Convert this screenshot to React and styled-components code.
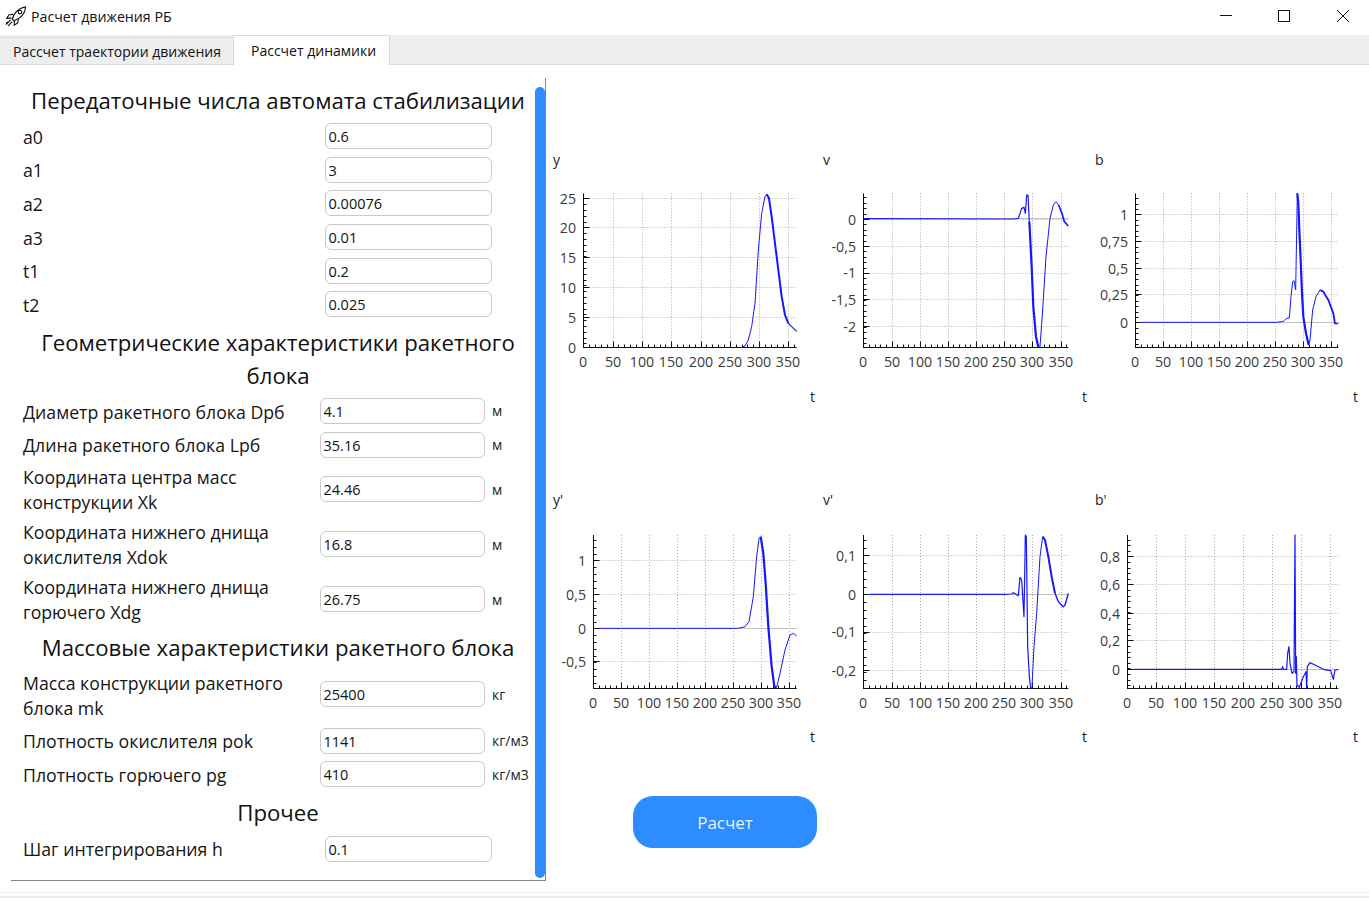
import React from 'react';
import styled, { createGlobalStyle } from 'styled-components';

const FONT = '"Open Sans", "Noto Sans", "Liberation Sans", sans-serif';

const Global = createGlobalStyle`
  html, body { margin: 0; padding: 0; background: #fff; overflow: hidden; }
  body { font-family: ${FONT}; color: #000; }
  * { box-sizing: border-box; }
`;

const Window = styled.div`
  width: 1369px; height: 898px; display: flex; flex-direction: column; overflow: hidden; background: #fff;
`;
const TitleBar = styled.div`
  height: 35px; flex: none; display: flex; align-items: center; padding-left: 5px;
`;
const AppIcon = styled.svg`
  width: 22px; height: 22px; flex: none; margin-right: 4px; margin-top: -3px;
`;
const AppTitle = styled.span`
  font-size: 14.2px; flex: 1; margin-top: -3px; color: #111;
`;
const WinButton = styled.svg`
  width: 58px; height: 35px; flex: none; display: block;
`;
const TabBar = styled.div`
  height: 30px; flex: none; display: flex; align-items: flex-end; background: #eee; border-bottom: 1px solid #dadada;
`;
const Tab = styled.div`
  font-size: 14px; display: flex; align-items: center; color: #111;
  ${p => p.$active ? `
    height: 30px; width: 157px; padding-left: 17px; background: #fff; border: 1px solid #dadada; border-bottom: none; margin-bottom: -1px;
  ` : `
    height: 27px; width: 233px; padding-left: 13px; background: #eee; border: 1px solid #dadada; border-left: none; border-right: none; border-bottom: none;
  `}
`;
const Body = styled.div`
  flex: 1; display: flex; min-height: 0; align-items: flex-start;
`;
const Panel = styled.div`
  position: relative; width: 535px; height: 803px; margin: 13px 0 0 11px; flex: none;
  border-right: 1px solid #7d8791; border-bottom: 1px solid #7d8791; padding: 5px 0 0 12px;
`;
const Thumb = styled.div`
  position: absolute; right: 0; top: 9px; width: 10px; height: 791px; background: #2d8cff; border-radius: 5px;
`;
const Form = styled.div`
  width: 510px; display: flex; flex-direction: column;
`;
const Heading = styled.div`
  font-size: 22.2px; line-height: 33px; text-align: center; margin: ${p => p.$m || '0'}; color: #111;
`;
const Row = styled.div`
  display: grid; align-items: center; height: ${p => p.$h || 33.7}px; margin-top: ${p => p.$mt || 0}px;
  grid-template-columns: ${p => p.$unit ? '297px 165px auto' : '302px 167px'};
`;
const Label = styled.div`
  font-size: 17.7px; line-height: 25px; white-space: pre-line; color: #151515; padding-top: 2.5px;
`;
const Field = styled.input`
  width: 100%; height: 26px; border: 1.5px solid #c9c9c9; border-radius: 6px; padding: 1px 0 0 2.5px; outline: none;
  font-family: ${FONT}; font-size: 14.5px; color: #111; background: #fff; display: block;
`;
const Unit = styled.div`
  font-size: 14px; padding-left: 7px; white-space: nowrap; color: #222;
`;
const Right = styled.div`
  flex: 1; padding: 85px 0 0 7px; display: flex; flex-direction: column; min-width: 0;
`;
const Charts = styled.div`
  display: grid; grid-template-columns: 270px 272px 271px; grid-auto-rows: 260px; row-gap: 80px;
`;
const Cell = styled.div`
  display: flex; flex-direction: column;
`;
const AxisTitle = styled.div`
  font-size: 14px; height: 20px; line-height: 20px; color: #222;
`;
const AxisFoot = styled.div`
  font-size: 14px; height: 25px; line-height: 23px; text-align: right; padding-right: 8px; color: #222;
`;
const Plot = styled.svg`
  display: block; width: 270px; height: 215px; overflow: visible;
`;
const TickText = styled.text`
  font-family: ${FONT}; font-size: 14.2px; fill: #3a3a3a;
`;
const CalcButton = styled.div`
  width: 184px; height: 52px; margin: 46px 0 0 80px; border-radius: 20px; background: #2d8cff; color: #e9f2ff;
  font-size: 17px; display: flex; align-items: center; justify-content: center;
`;
const Footer = styled.div`
  height: 6px; flex: none; border-top: 1px solid #eee; position: relative; background: #fff;
  &::after { content: ''; position: absolute; left: 0; right: 0; top: 3px; height: 2px; background: #ececec; }
`;

const X_LABELS = ['0', '50', '100', '150', '200', '250', '300', '350'];
const LINE = '#1616ff';

const charts = [
  {
    title: 'y', cx: 553, cy: 170, ox: 545, oy: 150, ax: 115, by: 592, rt: 755, tp: 130, step: 87.9,
    yt: [['25', 145], ['20', 232], ['15', 322], ['10', 412], ['5', 502], ['0', 592]],
    curves: [
      [1, [[590, 592], [600, 588], [610, 570], [620, 530], [630, 460], [640, 300], [650, 190], [660, 140], [665, 133]]],
      [2, [[665, 133], [672, 145], [680, 200], [690, 280], [700, 360], [710, 440], [720, 495], [730, 520]]],
      [1.2, [[730, 520], [740, 530], [755, 544]]],
    ],
  },
  {
    title: 'v', cx: 823, cy: 170, ox: 820, oy: 150, ax: 130, by: 592, rt: 745, tp: 130, step: 84.5, zero: 205,
    yt: [['0', 207], ['-0,5', 288], ['-1', 368], ['-1,5', 448], ['-2', 529]],
    curves: [
      [1.2, [[132, 206], [580, 207], [595, 205], [605, 175], [612, 172], [616, 190], [620, 135], [624, 135], [628, 215]]],
      [2.2, [[628, 215], [635, 350], [640, 470], [648, 560], [655, 592]]],
      [1, [[655, 592], [660, 590], [668, 480], [678, 320], [690, 205], [700, 165], [708, 155], [716, 165]]],
      [1.6, [[716, 165], [726, 190], [733, 215], [745, 228]]],
    ],
  },
  {
    title: 'b', cx: 1095, cy: 170, ox: 1090, oy: 150, ax: 136, by: 592, rt: 745, tp: 130, step: 84, zero: 516,
    yt: [['1', 193], ['0,75', 274], ['0,5', 355], ['0,25', 433], ['0', 516]],
    curves: [
      [1, [[155, 517], [560, 517], [580, 514], [590, 505], [598, 504], [603, 440], [608, 395], [612, 392], [617, 420], [622, 130]]],
      [2.2, [[622, 130], [625, 160], [628, 240], [632, 330], [636, 430], [640, 500], [648, 550], [656, 585]]],
      [1, [[656, 585], [660, 570], [668, 480], [678, 440], [690, 420]]],
      [1.8, [[690, 420], [700, 425], [715, 450], [730, 490], [735, 522]]],
      [1.2, [[735, 522], [745, 520]]],
    ],
  },
  {
    title: "y'", cx: 553, cy: 510, ox: 545, oy: 490, ax: 145, by: 595, rt: 755, tp: 135, step: 84, zero: 415,
    yt: [['1', 211], ['0,5', 313], ['0', 415], ['-0,5', 514]],
    curves: [
      [1, [[160, 415], [580, 415], [600, 410], [612, 395], [625, 320], [635, 200], [642, 145], [647, 140]]],
      [2.2, [[647, 140], [655, 190], [662, 280], [670, 410], [680, 530], [688, 590], [695, 592]]],
      [1, [[695, 592], [705, 550], [720, 480], [735, 435], [745, 430], [755, 438]]],
    ],
  },
  {
    title: "v'", cx: 823, cy: 510, ox: 820, oy: 490, ax: 130, by: 595, rt: 745, tp: 135, step: 84.5, zero: 313,
    yt: [['0,1', 196], ['0', 313], ['-0,1', 425], ['-0,2', 541]],
    curves: [
      [1.2, [[150, 313], [555, 313], [575, 312], [580, 308], [595, 317], [600, 262], [605, 270], [610, 350], [612, 380], [616, 135], [619, 140], [623, 470], [628, 560], [632, 595]]],
      [1, [[632, 595], [636, 590], [642, 470], [650, 370], [660, 200], [668, 140]]],
      [2, [[668, 140], [675, 150], [685, 200], [695, 260], [705, 310]]],
      [1.4, [[705, 310], [715, 335], [730, 350], [735, 345], [745, 310]]],
    ],
  },
  {
    title: "b'", cx: 1095, cy: 510, ox: 1090, oy: 490, ax: 112, by: 595, rt: 745, tp: 135, step: 87, zero: 538,
    yt: [['0,8', 199], ['0,6', 283], ['0,4', 370], ['0,2', 451], ['0', 538]],
    curves: [
      [1.2, [[130, 538], [575, 538], [578, 530], [580, 538], [590, 538], [593, 490], [597, 470], [600, 520], [606, 550], [612, 545], [615, 135], [617, 550], [619, 500], [621, 585], [628, 592], [640, 560], [648, 545], [650, 595], [652, 530], [660, 518], [675, 525], [700, 538], [722, 542], [730, 568], [735, 540], [745, 539]]],
    ],
  },
];

function Chart({ c }) {
  const X = z => c.ox + z / 3;
  const Y = z => c.oy + z / 3;
  const crisp = v => Math.round(v) + 0.5;
  const ax = crisp(X(c.ax)), by = crisp(Y(c.by)), rt = X(c.rt), tp = Y(c.tp);
  const xMajor = X_LABELS.map((_, i) => crisp(X(c.ax + c.step * i)));
  const xMinor = [];
  for (let x = X(c.ax); x <= rt; x += c.step / 15) xMinor.push(crisp(x));
  const yPix = c.yt.map(([, z]) => Y(z));
  const yStep = Math.abs(yPix[1] - yPix[0]) / 5;
  const yMinor = [];
  for (let y = yPix[0] % yStep; y <= by; y += yStep) if (y >= tp) yMinor.push(crisp(y));
  return (
    <Cell>
      <AxisTitle>{c.title}</AxisTitle>
      <Plot viewBox={`${c.cx} ${c.cy} 270 215`}>
        {xMajor.slice(1).map(x => (
          <line key={x} x1={x} x2={x} y1={tp} y2={by} stroke="#aaaaaa" strokeDasharray="1 2" />
        ))}
        {yPix.map(y => (
          <line key={y} x1={ax} x2={rt} y1={crisp(y)} y2={crisp(y)} stroke="#aaaaaa" strokeDasharray="1 2" />
        ))}
        {c.zero !== undefined && <line x1={ax} x2={rt} y1={crisp(Y(c.zero))} y2={crisp(Y(c.zero))} stroke="#c0c0c0" />}
        {xMinor.map((x, i) => <line key={i} x1={x} x2={x} y1={by - 3} y2={by} stroke="#111" />)}
        {xMajor.map(x => <line key={x} x1={x} x2={x} y1={by - 6} y2={by} stroke="#111" />)}
        {yMinor.map((y, i) => <line key={i} x1={ax} x2={ax + 3} y1={y} y2={y} stroke="#111" />)}
        {yPix.map(y => <line key={y} x1={ax} x2={ax + 6} y1={crisp(y)} y2={crisp(y)} stroke="#111" />)}
        <line x1={ax} x2={ax} y1={tp} y2={by + 0.5} stroke="#111" />
        <line x1={ax} x2={rt} y1={by} y2={by} stroke="#111" />
        {c.curves.map(([w, pts], i) => (
          <polyline key={i} points={pts.map(([a, b]) => `${X(a)},${Y(b)}`).join(' ')} fill="none" stroke={LINE} strokeWidth={w} strokeLinejoin="round" />
        ))}
        {X_LABELS.map((t, i) => (
          <TickText key={t} x={xMajor[i] - 0.5} y={by + 19} textAnchor="middle">{t}</TickText>
        ))}
        {c.yt.map(([t], i) => (
          <TickText key={t} x={ax - 7.5} y={yPix[i] + 5.5} textAnchor="end">{t}</TickText>
        ))}
      </Plot>
      <AxisFoot>t</AxisFoot>
    </Cell>
  );
}

const Item = ({ label, value, unit, h, mt }) => (
  <Row $unit={!!unit} $h={h} $mt={mt}>
    <Label>{label}</Label>
    <Field readOnly value={value} />
    {unit && <Unit>{unit}</Unit>}
  </Row>
);

export default function App() {
  return (
    <Window>
      <Global />
      <TitleBar>
        <AppIcon viewBox="0 0 24 24" fill="none" stroke="#111" strokeWidth="1.2" strokeLinecap="round" strokeLinejoin="round">
          <path d="M8 15.5c1-5.5 6-12 14.5-13.5C22 10 16 15 9.8 17.2z" />
          <circle cx="16.3" cy="7.7" r="2" />
          <path d="M8.6 10.2 4.4 10.6 1.8 14.6l5-.3" />
          <path d="M14.6 15 14 19.4l-4 2.8.2-4.6" />
          <path d="M5.8 16.6 1.4 21M7.6 18.4 3.6 22.6M2.4 18.6l-.8.8" />
        </AppIcon>
        <AppTitle>Расчет движения РБ</AppTitle>
        <WinButton viewBox="0 0 58 35"><line x1="25" x2="37" y1="15.5" y2="15.5" stroke="#111" /></WinButton>
        <WinButton viewBox="0 0 58 35"><rect x="25.5" y="10.5" width="11" height="11" fill="none" stroke="#111" /></WinButton>
        <WinButton viewBox="0 0 58 35"><path d="M26 10l12 12M38 10 26 22" stroke="#111" fill="none" /></WinButton>
      </TitleBar>
      <TabBar>
        <Tab>Рассчет траектории движения</Tab>
        <Tab $active>Рассчет динамики</Tab>
      </TabBar>
      <Body>
        <Panel>
          <Form>
            <Heading $m="1px 0 2px">Передаточные числа автомата стабилизации</Heading>
            <Item label="a0" value="0.6" />
            <Item label="a1" value="3" />
            <Item label="a2" value="0.00076" />
            <Item label="a3" value="0.01" />
            <Item label="t1" value="0.2" />
            <Item label="t2" value="0.025" />
            <Heading $m="5px 0 2px">Геометрические характеристики ракетного блока</Heading>
            <Item label="Диаметр ракетного блока Dрб" value="4.1" unit="м" />
            <Item label="Длина ракетного блока Lрб" value="35.16" unit="м" />
            <Item label={'Координата центра масс\nконструкции Xk'} value="24.46" unit="м" h={55} />
            <Item label={'Координата нижнего днища\nокислителя Xdok'} value="16.8" unit="м" h={55} />
            <Item label={'Координата нижнего днища\nгорючего Xdg'} value="26.75" unit="м" h={55} />
            <Heading $m="4.4px 0 3px">Массовые характеристики ракетного блока</Heading>
            <Item label={'Масса конструкции ракетного\nблока mk'} value="25400" unit="кг" h={55} />
            <Item label="Плотность окислителя pok" value="1141" unit="кг/м3" mt={2} />
            <Item label="Плотность горючего pg" value="410" unit="кг/м3" />
            <Heading $m="4.5px 0 3px">Прочее</Heading>
            <Item label="Шаг интегрирования h" value="0.1" />
          </Form>
          <Thumb />
        </Panel>
        <Right>
          <Charts>
            {charts.map(c => <Chart key={c.title} c={c} />)}
          </Charts>
          <CalcButton>Расчет</CalcButton>
        </Right>
      </Body>
      <Footer />
    </Window>
  );
}
